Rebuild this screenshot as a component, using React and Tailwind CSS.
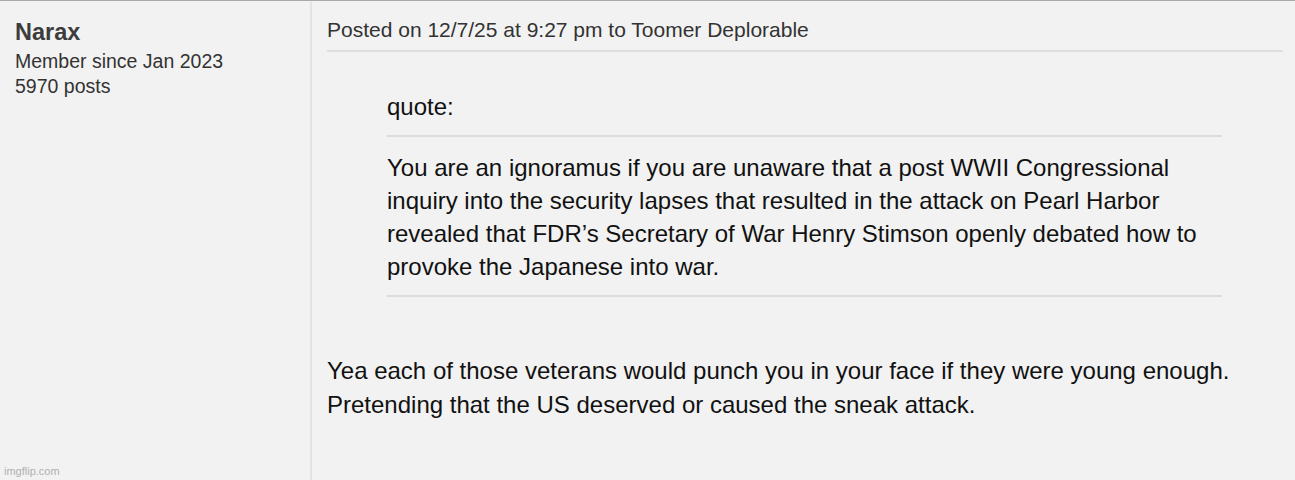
export default function App() {
  return (
    <div className="w-[1295px] h-[480px] bg-[#f2f2f2] border-t-[1px] border-[#a9a8a2] pt-[1px] overflow-hidden font-['Liberation_Sans',Arial,sans-serif] flex">
      <div className="w-[312px] shrink-0 border-r-2 border-[#e3e3e3] px-[15px] pt-[16px] relative">
        <div className="text-[23.5px] font-bold text-[#3c3c3c] leading-[28px]">Narax</div>
        <div className="text-[19.5px] text-[#333] leading-[25px] mt-[3px]">Member since Jan 2023</div>
        <div className="text-[19.5px] text-[#333] leading-[25px]">5970 posts</div>
        <div className="absolute left-[4px] bottom-[1px] text-[11px] text-[#b0b0b0]">imgflip.com</div>
      </div>
      <div className="flex-1 pl-[15px] pr-[12px] pt-[16px]">
        <div className="text-[21px] text-[#333] leading-[24px] pb-[8px] border-b-2 border-[#dedede]">
          Posted on 12/7/25 at 9:27 pm to Toomer Deplorable
        </div>
        <div className="ml-[60px] mr-[61px] mt-[41px]">
          <div className="text-[24px] text-[#111] leading-[28px]">quote:</div>
          <div className="mt-[14px] border-t-2 border-[#dcdcdc] pt-[14px] pb-[12px] border-b-2 text-[24px] text-[#111] leading-[33px]">
            You are an ignoramus if you are unaware that a post WWII Congressional inquiry into the security lapses that resulted in the attack on Pearl Harbor revealed that FDR’s Secretary of War Henry Stimson openly debated how to provoke the Japanese into war.
          </div>
        </div>
        <div className="mt-[57px] text-[24px] text-[#111] leading-[34px]">
          Yea each of those veterans would punch you in your face if they were young enough.
          <br />
          Pretending that the US deserved or caused the sneak attack.
        </div>
      </div>
    </div>
  );
}
